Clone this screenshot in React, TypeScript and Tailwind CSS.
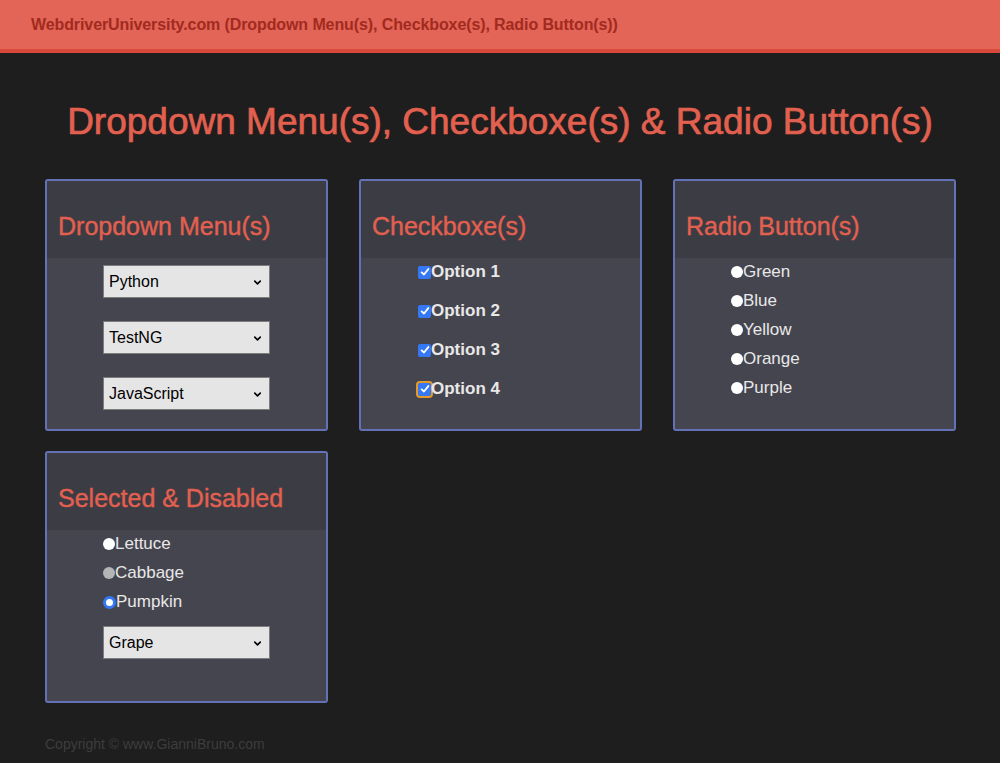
import { ChevronDown } from "lucide-react";

const font = "font-['Liberation_Sans',Arial,sans-serif]";

function Select({ value }: { value: string }) {
  return (
    <div className="relative w-[167px] h-[33px] bg-[#e5e5e5] border border-[#7c7c7c] flex items-center pl-[5px] text-[16px] text-black">
      {value}
      <ChevronDown className="absolute right-[6px] top-[11px] w-[11px] h-[11px]" strokeWidth={3.5} />
    </div>
  );
}

function Check({ focus }: { focus?: boolean }) {
  return (
    <span
      className={
        "w-[13px] h-[13px] rounded-[2px] bg-[#3478f6] flex items-center justify-center shrink-0 " +
        (focus ? "outline-2 outline-[#e39a2b]" : "")
      }
    >
      <svg viewBox="0 0 12 12" className="w-[10px] h-[10px]">
        <path d="M2 6.5 L4.8 9 L10 2.5" fill="none" stroke="white" strokeWidth="2.2" strokeLinecap="round" strokeLinejoin="round" />
      </svg>
    </span>
  );
}

function Radio({ state }: { state?: "disabled" | "checked" }) {
  if (state === "checked")
    return <span className="w-[13px] h-[13px] rounded-full bg-white border-[3px] border-[#3478f6] shrink-0" />;
  return (
    <span className={"w-[12px] h-[12px] rounded-full shrink-0 " + (state === "disabled" ? "bg-[#b5b5b5]" : "bg-white")} />
  );
}

function Card({ title, children }: { title: string; children: React.ReactNode }) {
  return (
    <div className="w-[283px] h-[252px] border-2 border-[#6372b6] rounded-[3px] bg-[#45454f] flex flex-col overflow-hidden">
      <div className="h-[77px] bg-[#3c3c44] flex items-end pl-[11px] pb-[19px] shrink-0">
        <h2 className="text-[25px] text-[#e2604f] leading-none [-webkit-text-stroke:0.4px_#e2604f]">{title}</h2>
      </div>
      {children}
    </div>
  );
}

export default function App() {
  const checks = ["Option 1", "Option 2", "Option 3", "Option 4"];
  const colours = ["Green", "Blue", "Yellow", "Orange", "Purple"];
  return (
    <div className={"min-h-[763px] bg-[#1e1e1e] " + font}>
      <div className="h-[53px] bg-[#e26557] border-b-4 border-[#d9493b] flex items-center pl-[31px]">
        <span className="text-[16px] font-bold text-[#a22a1e] tracking-[-0.1px] mt-[1px]">
          WebdriverUniversity.com (Dropdown Menu(s), Checkboxe(s), Radio Button(s))
        </span>
      </div>

      <h1 className="text-center text-[37px] text-[#e2604f] mt-[50px] leading-none [-webkit-text-stroke:0.7px_#e2604f]">
        Dropdown Menu(s), Checkboxe(s) &amp; Radio Button(s)
      </h1>

      <div className="ml-[45px] mt-[39px] grid grid-cols-[283px_283px_283px] gap-x-[31px] gap-y-[20px]">
        <Card title="Dropdown Menu(s)">
          <div className="flex flex-col gap-[23px] pl-[56px] pt-[7px]">
            <Select value="Python" />
            <Select value="TestNG" />
            <Select value="JavaScript" />
          </div>
        </Card>

        <Card title="Checkboxe(s)">
          <div className="flex flex-col gap-[19px] pl-[57px] pt-[4px]">
            {checks.map((c, i) => (
              <label key={c} className="flex items-center h-[20px] text-[17px] font-bold text-[#e8e8e8]">
                <Check focus={i === 3} />
                {c}
              </label>
            ))}
          </div>
        </Card>

        <Card title="Radio Button(s)">
          <div className="flex flex-col gap-[9px] pl-[56px] pt-[4px]">
            {colours.map(c => (
              <label key={c} className="flex items-center h-[20px] text-[17px] text-[#e8e8e8]">
                <Radio />
                {c}
              </label>
            ))}
          </div>
        </Card>

        <Card title="Selected & Disabled">
          <div className="flex flex-col gap-[9px] pl-[56px] pt-[4px]">
            <label className="flex items-center h-[20px] text-[17px] text-[#e8e8e8]">
              <Radio />
              Lettuce
            </label>
            <label className="flex items-center h-[20px] text-[17px] text-[#e8e8e8]">
              <Radio state="disabled" />
              Cabbage
            </label>
            <label className="flex items-center h-[20px] text-[17px] text-[#e8e8e8]">
              <Radio state="checked" />
              Pumpkin
            </label>
            <div className="mt-[5px]">
              <Select value="Grape" />
            </div>
          </div>
        </Card>
      </div>

      <p className="ml-[45px] mt-[31px] text-[14px] text-[#3d3d3d]">Copyright © www.GianniBruno.com</p>
    </div>
  );
}
